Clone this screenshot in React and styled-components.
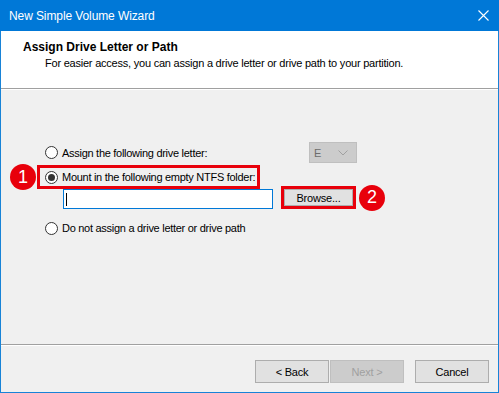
import React from 'react';
import styled, { createGlobalStyle } from 'styled-components';

const GlobalStyle = createGlobalStyle`
  html, body {
    margin: 0;
    padding: 0;
    background: #ffffff;
  }
  body {
    font-family: "Liberation Sans", Arial, sans-serif;
    font-size: 11px;
    color: #000000;
  }
`;

const Window = styled.div`
  width: 499px;
  height: 393px;
  box-sizing: border-box;
  border: 1px solid #1883d7;
  border-top: none;
  display: flex;
  flex-direction: column;
  background: #f0f0f0;
`;

const TitleBar = styled.div`
  height: 31px;
  flex-shrink: 0;
  background: #0078d7;
  color: #ffffff;
  font-size: 12px;
  letter-spacing: -0.1px;
  display: flex;
  align-items: center;
  justify-content: space-between;
  padding: 0 10px 0 9px;
  margin: 0 -1px;
`;

const Header = styled.div`
  height: 58px;
  flex-shrink: 0;
  box-sizing: border-box;
  background: #ffffff;
  border-bottom: 1px solid #a0a0a0;
  padding: 9px 0 0 22px;
`;

const HeaderTitle = styled.div`
  font-weight: bold;
  font-size: 12px;
  line-height: 14px;
`;

const HeaderText = styled.div`
  line-height: 14px;
  margin-top: 2px;
  padding-left: 22px;
  letter-spacing: -0.22px;
`;

const Content = styled.div`
  flex: 1;
  padding-left: 36px;
  border-top: 1px solid #ffffff;
  letter-spacing: -0.28px;
`;

const Row = styled.div`
  box-sizing: border-box;
  display: flex;
  align-items: ${(p) => p.$align || 'center'};
  height: ${(p) => p.$height}px;
  margin-top: ${(p) => p.$top}px;
  padding-left: ${(p) => p.$indent || 0}px;
  width: ${(p) => (p.$width ? `${p.$width}px` : 'auto')};
  justify-content: ${(p) => p.$justify || 'flex-start'};
`;

const RadioLabel = styled.label`
  display: flex;
  align-items: center;
  gap: 4px;
  white-space: nowrap;
`;

const RadioCircle = styled.span`
  width: 13px;
  height: 13px;
  box-sizing: border-box;
  border-radius: 50%;
  border: 1px solid #333333;
  background: #ffffff;
  display: flex;
  align-items: center;
  justify-content: center;

  &::after {
    content: '';
    width: 7px;
    height: 7px;
    border-radius: 50%;
    background: ${(p) => (p.$checked ? '#333333' : 'transparent')};
  }
`;

const Highlight = styled.div`
  position: relative;
  display: flex;
  align-items: center;
  box-sizing: border-box;
  border: 3px solid #e8000b;
  height: ${(p) => p.$height}px;
  width: ${(p) => p.$width}px;
  padding-left: ${(p) => p.$pad || 0}px;
  margin-left: ${(p) => p.$gap || 0}px;
`;

const Badge = styled.span`
  position: absolute;
  top: 50%;
  ${(p) => (p.$side === 'left' ? 'left: -30px;' : 'right: -32px;')}
  transform: translateY(-50%);
  width: 26px;
  height: 26px;
  border-radius: 50%;
  background: #e8000b;
  color: #ffffff;
  font-family: "Liberation Sans", Arial, sans-serif;
  font-size: 18px;
  letter-spacing: 0;
  display: flex;
  align-items: center;
  justify-content: center;
`;

const Combo = styled.div`
  width: 48px;
  height: 21px;
  box-sizing: border-box;
  background: #cccccc;
  border: 1px solid #bfbfbf;
  color: #6d6d6d;
  display: flex;
  align-items: center;
  justify-content: space-between;
  padding: 0 8px 0 4px;
`;

const PathInput = styled.div`
  width: 210px;
  height: 20px;
  box-sizing: border-box;
  background: #ffffff;
  border: 1px solid #0078d7;
  display: flex;
  align-items: center;
  padding-left: 2px;

  &::before {
    content: '';
    width: 1px;
    height: 13px;
    background: #000000;
  }
`;

const Button = styled.button`
  width: ${(p) => p.$width || 74}px;
  height: ${(p) => p.$height || 23}px;
  box-sizing: border-box;
  margin: 0;
  margin-left: ${(p) => p.$gap || 0}px;
  padding: 0;
  font-family: "Liberation Sans", Arial, sans-serif;
  font-size: 11px;
  letter-spacing: -0.2px;
  color: ${(p) => (p.disabled ? '#a0a0a0' : '#000000')};
  background: ${(p) => (p.disabled ? '#cccccc' : '#e1e1e1')};
  border: 1px solid ${(p) => (p.disabled ? '#bfbfbf' : '#adadad')};
`;

const Footer = styled.div`
  height: 48px;
  flex-shrink: 0;
  box-sizing: border-box;
  border-top: 1px solid #a0a0a0;
  box-shadow: inset 0 1px 0 #ffffff;
  display: flex;
  justify-content: flex-end;
  align-items: flex-start;
  padding: 15px 9px 0 0;
`;

function Radio({ checked, children }) {
  return (
    <RadioLabel>
      <RadioCircle $checked={checked} />
      <span>{children}</span>
    </RadioLabel>
  );
}

export default function App() {
  return (
    <>
      <GlobalStyle />
      <Window>
        <TitleBar>
          <span>New Simple Volume Wizard</span>
          <svg width="11" height="11" viewBox="0 0 11 11">
            <path d="M0.5 0.5 L10.5 10.5 M10.5 0.5 L0.5 10.5" stroke="#ffffff" strokeWidth="1.1" />
          </svg>
        </TitleBar>

        <Header>
          <HeaderTitle>Assign Drive Letter or Path</HeaderTitle>
          <HeaderText>
            For easier access, you can assign a drive letter or drive path to your partition.
          </HeaderText>
        </Header>

        <Content>
          <Row $top={52} $height={21} $indent={8} $width={320} $justify="space-between">
            <Radio>Assign the following drive letter:</Radio>
            <Combo>
              <span>E</span>
              <svg width="10" height="6" viewBox="0 0 10 6">
                <path d="M0.5 0.5 L5 5 L9.5 0.5" fill="none" stroke="#a0a0a0" strokeWidth="1" />
              </svg>
            </Combo>
          </Row>

          <Row $top={2} $height={24}>
            <Highlight $height={24} $width={223} $pad={5}>
              <Badge $side="left">1</Badge>
              <Radio checked>Mount in the following empty NTFS folder:</Radio>
            </Highlight>
          </Row>

          <Row $top={-3} $height={23} $indent={26} $align="flex-end">
            <PathInput />
            <Highlight $height={23} $width={75} $gap={8}>
              <Badge $side="right">2</Badge>
              <Button $width={69} $height={17}>Browse...</Button>
            </Highlight>
          </Row>

          <Row $top={10} $height={18} $indent={8}>
            <Radio>Do not assign a drive letter or drive path</Radio>
          </Row>
        </Content>

        <Footer>
          <Button>&lt; Back</Button>
          <Button disabled $gap={1}>Next &gt;</Button>
          <Button $gap={11}>Cancel</Button>
        </Footer>
      </Window>
    </>
  );
}
